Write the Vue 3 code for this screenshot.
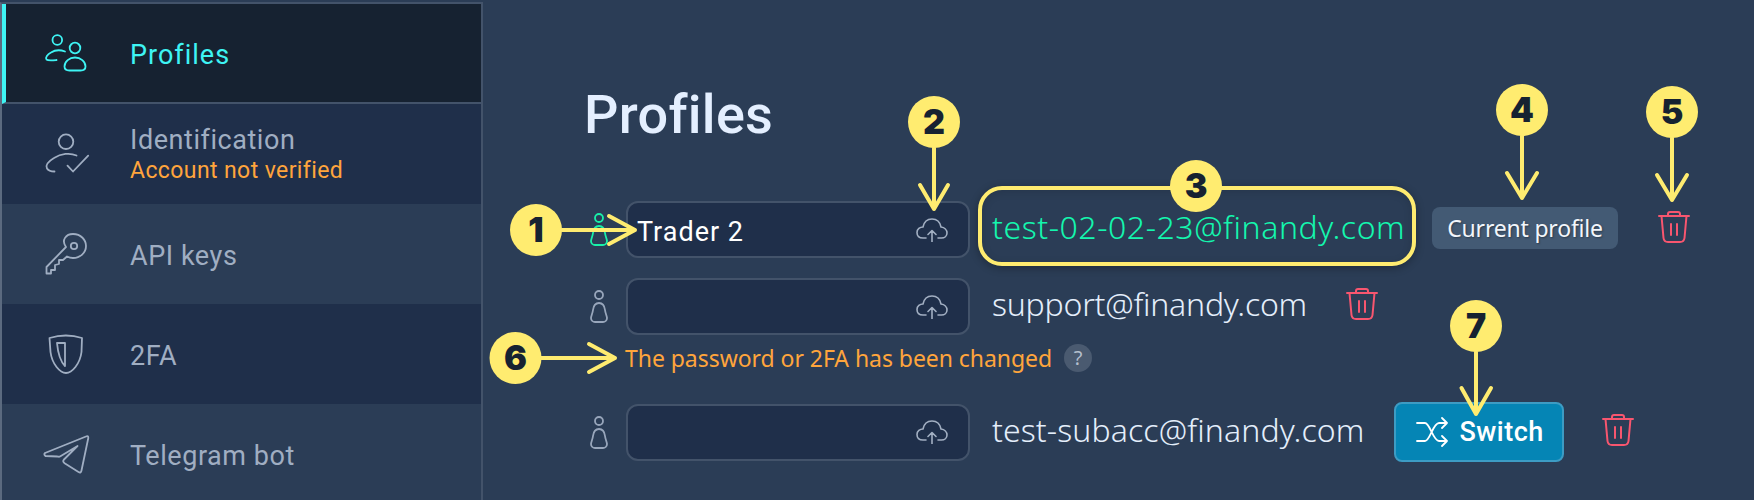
<script setup>
const navItems = [
  { key: 'profiles', label: 'Profiles', tone: 'active' },
  { key: 'id', label: 'Identification', sub: 'Account not verified', tone: 'dark' },
  { key: 'api', label: 'API keys', tone: 'light' },
  { key: '2fa', label: '2FA', tone: 'dark' },
  { key: 'tg', label: 'Telegram bot', tone: 'light' },
]
const callouts = [
  { n: 1, cx: 536, cy: 230 },
  { n: 2, cx: 934, cy: 122 },
  { n: 3, cx: 1196, cy: 186 },
  { n: 4, cx: 1522, cy: 110 },
  { n: 5, cx: 1672, cy: 112 },
  { n: 6, cx: 515.5, cy: 358 },
  { n: 7, cx: 1476, cy: 326 },
]
const arrows = [
  'M562 230H635M609 216L635 230L609 244',
  'M934 148V209M920 185L934 209L948 185',
  'M1522 136V198M1507 173L1522 198L1537 173',
  'M1672 138V200M1657 175L1672 200L1687 175',
  'M541 358H615M589 344L615 358L589 372',
  'M1476 352V414M1461.5 388L1476 414L1491 388',
]
</script>

<template>
  <div class="page">
    <aside class="sidebar">
      <div v-for="item in navItems" :key="item.key" class="nav-item" :class="'tone-' + item.tone">
        <svg class="nav-icon" viewBox="0 0 48 48" fill="none" stroke="currentColor" stroke-width="1.8" stroke-linecap="round" stroke-linejoin="round">
          <template v-if="item.key === 'profiles'">
            <circle cx="15.3" cy="11" r="4.8" />
            <circle cx="33" cy="19" r="5.3" />
            <path d="M23 22.5C19 21 13 21 9 23.5C5.5 25.5 3 28.5 4.5 30.5C6 32 10 31.5 14.5 31" />
            <path d="M27.5 41.5H38.5C41.5 41.5 43.5 40 43.5 37.5C43.5 32.5 38.5 28.5 33 28.5S22.5 32.5 22.5 37.5C22.5 40 24.5 41.5 27.5 41.5Z" />
          </template>
          <template v-else-if="item.key === 'id'">
            <circle cx="24" cy="11.7" r="7.3" />
            <path d="M34.5 25.5C28 22.5 19 23.5 12 28C7 31 3 35 5 38.5C6.5 41 9.5 41.5 12.5 41.5" />
            <path d="M25.5 35.7L31 41.5L46.2 25.7" />
          </template>
          <template v-else-if="item.key === 'api'">
            <path d="M4.5 43.5V37L24 17C19 10 24 4 31 4C39 4 44 10 44 16C44 23 38 28 31 28C28.5 28 27 27.5 25 26.5L21 30H17V34L13 35V40H9V43.5Z" />
            <circle cx="32" cy="16" r="3.2" />
          </template>
          <template v-else-if="item.key === '2fa'">
            <path d="M7.5 8Q24 3 40 8L39.5 22C38 34 30 43 24 43C18 43 10 34 8.5 22Z" />
            <path d="M15 13H23V36C19 32 16 24 15 13Z" />
          </template>
          <template v-else>
            <path d="M3 23L44 6.5Q46.5 5.5 46.3 8L39.5 40.5Q39 43.5 36.5 42L23 33.5Q20 31.5 22 29.5L35.5 16L18 26.5Q17 27 15.5 26.5L3.5 26Q1.5 24.5 3 23Z" />
          </template>
        </svg>
        <div class="nav-text">
          <div class="nav-label">{{ item.label }}</div>
          <div v-if="item.sub" class="nav-sub">{{ item.sub }}</div>
        </div>
      </div>
    </aside>

    <main class="main">
      <h1 class="title">Profiles</h1>

      <div class="row row-first">
        <svg class="person person-on" viewBox="0 0 18 33" fill="none" stroke="currentColor" stroke-width="1.8">
          <circle cx="9" cy="5" r="4" />
          <path d="M9 13C5 13 3.5 16 3 20C2.5 24 1 26 1 28C1 30.5 3 32 5 32H13C15 32 17 30.5 17 28C17 26 15.5 24 15 20C14.5 16 13 13 9 13Z" />
        </svg>
        <div class="field">
          <span class="field-value">Trader 2</span>
          <svg class="cloud" viewBox="0 0 32 24" fill="none" stroke="currentColor" stroke-width="1.6" stroke-linecap="round" stroke-linejoin="round">
            <path d="M10 20H7C3 20 1 17.5 1 14.5C1 11 4 9 7 9C8 4 11.5 1 16 1C20.5 1 24 4 25 9C28.5 9.5 31 12 31 15C31 18 28.5 20 25.5 20H22" />
            <path d="M16 24V13M12 16.5L16 12.5L20 16.5" />
          </svg>
        </div>
        <span class="email email-on">test-02-02-23@finandy.com</span>
        <span class="badge">Current profile</span>
        <svg class="trash trash-first" viewBox="0 0 32 32" fill="none" stroke="currentColor" stroke-width="2" stroke-linecap="round" stroke-linejoin="round">
          <path d="M1 5H31M10 5V3Q10 1 12 1H20Q22 1 22 3V5M3.5 5L5.5 27Q6 31 10 31H22Q26 31 26.5 27L28.5 5M13 13V24M19 13V24" />
        </svg>
      </div>

      <div class="row row-second">
        <svg class="person" viewBox="0 0 18 33" fill="none" stroke="currentColor" stroke-width="1.8">
          <circle cx="9" cy="5" r="4" />
          <path d="M9 13C5 13 3.5 16 3 20C2.5 24 1 26 1 28C1 30.5 3 32 5 32H13C15 32 17 30.5 17 28C17 26 15.5 24 15 20C14.5 16 13 13 9 13Z" />
        </svg>
        <div class="field">
          <svg class="cloud" viewBox="0 0 32 24" fill="none" stroke="currentColor" stroke-width="1.6" stroke-linecap="round" stroke-linejoin="round">
            <path d="M10 20H7C3 20 1 17.5 1 14.5C1 11 4 9 7 9C8 4 11.5 1 16 1C20.5 1 24 4 25 9C28.5 9.5 31 12 31 15C31 18 28.5 20 25.5 20H22" />
            <path d="M16 24V13M12 16.5L16 12.5L20 16.5" />
          </svg>
        </div>
        <span class="email email-support">support@finandy.com</span>
        <svg class="trash trash-second" viewBox="0 0 32 32" fill="none" stroke="currentColor" stroke-width="2" stroke-linecap="round" stroke-linejoin="round">
          <path d="M1 5H31M10 5V3Q10 1 12 1H20Q22 1 22 3V5M3.5 5L5.5 27Q6 31 10 31H22Q26 31 26.5 27L28.5 5M13 13V24M19 13V24" />
        </svg>
      </div>

      <div class="warning">
        <span>The password or 2FA has been changed</span>
        <span class="help">?</span>
      </div>

      <div class="row row-third">
        <svg class="person" viewBox="0 0 18 33" fill="none" stroke="currentColor" stroke-width="1.8">
          <circle cx="9" cy="5" r="4" />
          <path d="M9 13C5 13 3.5 16 3 20C2.5 24 1 26 1 28C1 30.5 3 32 5 32H13C15 32 17 30.5 17 28C17 26 15.5 24 15 20C14.5 16 13 13 9 13Z" />
        </svg>
        <div class="field">
          <svg class="cloud" viewBox="0 0 32 24" fill="none" stroke="currentColor" stroke-width="1.6" stroke-linecap="round" stroke-linejoin="round">
            <path d="M10 20H7C3 20 1 17.5 1 14.5C1 11 4 9 7 9C8 4 11.5 1 16 1C20.5 1 24 4 25 9C28.5 9.5 31 12 31 15C31 18 28.5 20 25.5 20H22" />
            <path d="M16 24V13M12 16.5L16 12.5L20 16.5" />
          </svg>
        </div>
        <span class="email email-third">test-subacc@finandy.com</span>
        <button class="switch" type="button">
          <svg class="shuffle" viewBox="0 0 32 30" fill="none" stroke="currentColor" stroke-width="1.8" stroke-linecap="round" stroke-linejoin="round">
            <path d="M1 6H9C14 6 17 24 23 24H31M1 24H9C14 24 17 6 23 6H31M26 1L31 6L26 11M26 19L31 24L26 29" />
          </svg>
          <span>Switch</span>
        </button>
        <svg class="trash trash-third" viewBox="0 0 32 32" fill="none" stroke="currentColor" stroke-width="2" stroke-linecap="round" stroke-linejoin="round">
          <path d="M1 5H31M10 5V3Q10 1 12 1H20Q22 1 22 3V5M3.5 5L5.5 27Q6 31 10 31H22Q26 31 26.5 27L28.5 5M13 13V24M19 13V24" />
        </svg>
      </div>
    </main>

    <div class="highlight"></div>
    <svg class="overlay" viewBox="0 0 1754 500" fill="none">
      <path v-for="(d, i) in arrows" :key="i" :d="d" stroke="#ffec70" stroke-width="4" stroke-linecap="round" stroke-linejoin="round" />
      <g v-for="c in callouts" :key="c.n">
        <circle :cx="c.cx" :cy="c.cy" r="26" fill="#ffec70" />
        <text class="callout-num" :x="c.cx" :y="c.cy + 12" text-anchor="middle">{{ c.n }}</text>
      </g>
    </svg>
  </div>
</template>

<style>
html, body { background: #2b3d56; }
</style>

<style scoped>
.page {
  position: relative;
  display: flex;
  width: 1754px;
  height: 500px;
  overflow: hidden;
  box-sizing: border-box;
  padding-top: 2px;
  background: #2b3d56;
  font-family: Roboto, "Noto Sans", sans-serif;
}
.sidebar {
  flex: none;
  width: 483px;
  box-sizing: border-box;
  border-top: 2px solid #43536a;
  border-left: 2px solid #5b6a7f;
  border-right: 2px solid #43536a;
  display: flex;
  flex-direction: column;
}
.nav-item {
  flex: none;
  height: 100px;
  box-sizing: border-box;
  display: flex;
  align-items: center;
  padding-left: 40px;
  gap: 40px;
  color: #a0aec2;
}
.tone-active {
  background: #162231;
  color: #3ef4f4;
  border-left: 4px solid #3ef4f4;
  border-bottom: 2px solid #43536a;
  padding-left: 36px;
}
.tone-dark { background: #1f2f4a; }
.tone-light { background: #2b3d56; }
.nav-icon { flex: none; width: 48px; height: 48px; }
.nav-text { padding-top: 1px; }
.nav-label { font-size: 27px; line-height: 32px; font-weight: 400; letter-spacing: 0.55px; }
.tone-active .nav-label { letter-spacing: 1px; }
.nav-label:only-child { padding-top: 3px; }
.nav-sub { margin-top: 1px; font-size: 23px; line-height: 28px; font-weight: 400; color: #ffa53c; letter-spacing: 0.4px; }
.main { flex: 1; min-width: 0; padding: 0 0 0 101px; }
.title {
  margin: 81px 0 0;
  font-size: 54px;
  line-height: 64px;
  font-weight: 500;
  letter-spacing: 0.3px;
  color: #e4efff;
}
.row { display: flex; align-items: center; margin-left: 6px; }
.row-first { margin-top: 54px; }
.row-second { margin-top: 20px; }
.row-third { margin-top: 20px; }
.person { flex: none; width: 18px; height: 33px; color: #98a6bb; margin-right: 18px; }
.person-on { color: #19f0a8; }
.field {
  flex: none;
  width: 344px;
  height: 57px;
  box-sizing: border-box;
  display: flex;
  align-items: center;
  justify-content: flex-end;
  padding: 0 20px 0 9px;
  background: #1f2f4a;
  border: 2px solid #43536a;
  border-radius: 12px;
}
.field-value { flex: 1; padding-top: 4px; color: #fff; font-size: 27px; font-weight: 400; letter-spacing: 1px; }
.cloud { flex: none; width: 32px; height: 24px; color: #a2afc2; }
.email {
  margin-left: 22px;
  margin-bottom: 6px;
  font-family: "Noto Sans", sans-serif;
  font-size: 32px;
  font-weight: 300;
  color: #e4eefb;
  white-space: nowrap;
  letter-spacing: 0.1px;
}
.email-on { color: #14f7ae; letter-spacing: 0.55px; }
.email-support { letter-spacing: -0.23px; }
.badge {
  margin-left: 27px;
  margin-bottom: 3px;
  height: 42px;
  line-height: 42px;
  padding: 0 15px;
  border-radius: 8px;
  background: #435a74;
  color: #f2f6fb;
  font-family: "Noto Sans", sans-serif;
  font-size: 23px;
  letter-spacing: -0.2px;
  white-space: nowrap;
  text-shadow: 1px 1px 2px rgba(0, 0, 0, 0.35);
}
.trash { flex: none; width: 32px; height: 32px; margin-bottom: 5px; color: #f8566f; }
.trash-first { margin-left: 40px; }
.trash-second { margin-left: 39px; }
.trash-third { margin-left: 38px; }
.warning {
  display: flex;
  align-items: center;
  gap: 12px;
  height: 48px;
  margin: -1px 0 0 41px;
  color: #ffa53c;
  font-family: "Noto Sans", sans-serif;
  font-size: 23px;
  letter-spacing: -0.05px;
}
.help {
  width: 28px;
  height: 28px;
  border-radius: 50%;
  background: #4a5a70;
  color: #b4bfce;
  font-size: 20px;
  line-height: 28px;
  text-align: center;
}
.switch {
  flex: none;
  width: 170px;
  height: 60px;
  margin-left: 30px;
  box-sizing: border-box;
  display: flex;
  align-items: center;
  gap: 11px;
  padding: 0 0 0 20px;
  background: #0585b5;
  border: 2px solid #3d9cc4;
  border-radius: 8px;
  color: #fff;
  font-family: Roboto, sans-serif;
  font-size: 27px;
  font-weight: 500;
  letter-spacing: 0.5px;
}
.shuffle { flex: none; width: 32px; height: 30px; }
.highlight {
  position: absolute;
  left: 978px;
  top: 186px;
  width: 438px;
  height: 80px;
  box-sizing: border-box;
  border: 4px solid #ffec70;
  border-radius: 24px;
  box-shadow: 0 2px 8px rgba(0, 0, 0, 0.3), inset 0 2px 8px rgba(0, 0, 0, 0.12);
}
.overlay { position: absolute; left: 0; top: 0; width: 1754px; height: 500px; pointer-events: none; }
.callout-num { font-family: Inter, sans-serif; font-size: 34px; font-weight: 900; fill: #162231; }
</style>
